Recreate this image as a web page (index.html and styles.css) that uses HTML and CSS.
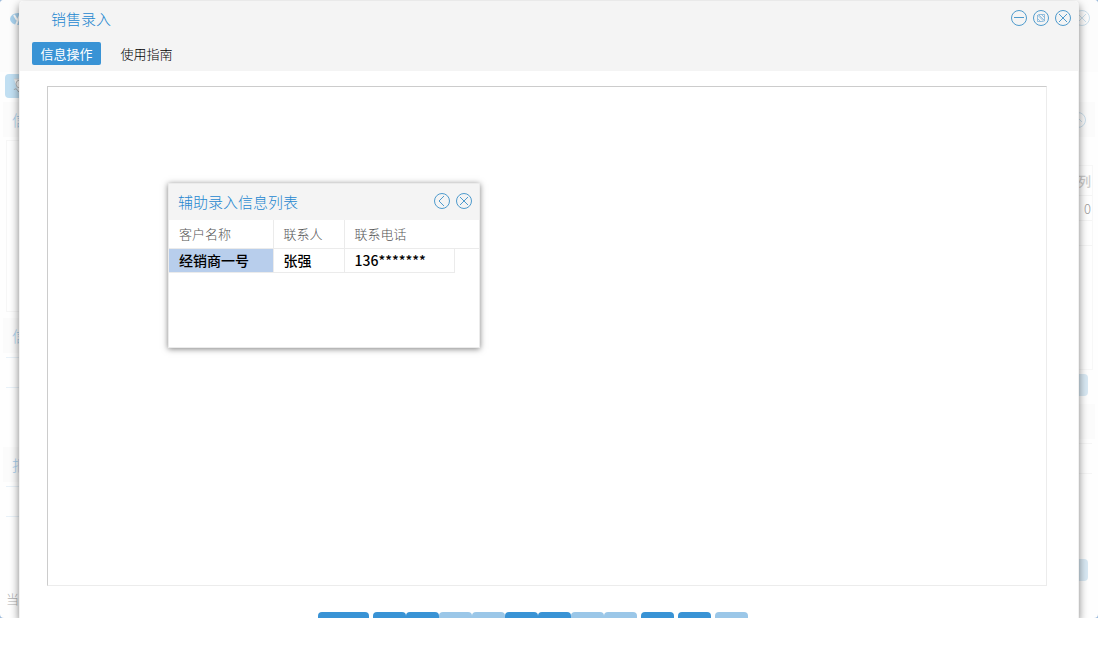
FILE: index.html
```html
<!DOCTYPE html>
<html lang="zh-CN">
<head>
    <meta charset="UTF-8">
    <meta name="viewport" content="width=device-width, initial-scale=1.0">
    <title>销售录入</title>
    <link rel="stylesheet" href="styles.css">
</head>
<body>
    <div class="screen">
        <!-- page behind the window -->
        <div class="backdrop" aria-hidden="true">
            <div class="back-header">
                <svg class="logo" width="26" height="14" viewBox="0 0 26 14"><ellipse cx="8" cy="7" rx="8" ry="6" fill="#a9d2ee"/><path d="M4 3l3 5M10 3L6 13" stroke="#fff" stroke-width="2" fill="none"/></svg>
                <svg width="16" height="16" viewBox="0 0 16 16" class="back-icon"><circle cx="8" cy="8" r="7.5"/><path d="M4 4l8 8M12 4l-8 8"/></svg>
            </div>
            <div class="back-body">
                <div class="back-left">
                    <div class="back-tab"><svg width="16" height="16" viewBox="0 0 16 16"><path d="M1 1h14v14H6" fill="#f4f4f4" stroke="#d5d5d5"/><circle cx="7" cy="6" r="4" fill="#f8f8f8" stroke="#b9b9b9"/><path d="M1 12c1-2 3-1 4 1s3 2 4 1" fill="none" stroke="#a5a5a5"/></svg></div>
                    <div class="back-title">信</div>
                    <div class="back-box"></div>
                    <div class="back-title">信</div>
                    <div class="back-line"></div>
                    <div class="back-title">报</div>
                    <div class="back-line"></div>
                    <div class="back-status">当</div>
                </div>
                <div class="back-right">
                    <div class="back-title">
                        <svg width="16" height="16" viewBox="0 0 16 16" class="back-icon"><circle cx="8" cy="8" r="7.5"/><path d="M4 10l4-4 4 4"/></svg>
                    </div>
                    <div class="back-grid">
                        <div class="back-cell back-th">列</div>
                        <div class="back-cell">0</div>
                        <div class="back-cell"></div>
                    </div>
                    <div class="back-button"></div>
                    <div class="back-title"></div>
                    <div class="back-line"></div>
                    <div class="back-button"></div>
                </div>
            </div>
        </div>

        <main class="window">
            <header class="window-header">
                <div class="title-row">
                    <h1>销售录入</h1>
                    <div class="controls">
                        <button class="icon-btn" aria-label="最小化"><svg width="16" height="16" viewBox="0 0 16 16"><circle cx="8" cy="8" r="7.5"/><path d="M3 7.5h10"/></svg></button>
                        <button class="icon-btn" aria-label="还原"><svg width="16" height="16" viewBox="0 0 16 16"><circle cx="8" cy="8" r="7.5"/><path class="thin" d="M5.500 4.500h6v6.500M4.500 5v6.500h6M4.500 5l6.500 6.500M5.500 4.500l6 6M8.500 4.500l3 3M4.500 8.500l3 3"/></svg></button>
                        <button class="icon-btn" aria-label="关闭"><svg width="16" height="16" viewBox="0 0 16 16"><circle cx="8" cy="8" r="7.5"/><path d="M4 4l8 8M12 4l-8 8"/></svg></button>
                    </div>
                </div>
                <nav class="tabs">
                    <button class="tab active">信息操作</button>
                    <button class="tab">使用指南</button>
                </nav>
            </header>

            <div class="workspace">
                <section class="dialog">
                    <div class="dialog-header">
                        <h2>辅助录入信息列表</h2>
                        <div class="controls">
                            <button class="icon-btn" aria-label="返回"><svg width="16" height="16" viewBox="0 0 16 16"><circle cx="8" cy="8" r="7.5"/><path d="M10 3L5 8l5 5"/></svg></button>
                            <button class="icon-btn" aria-label="关闭列表"><svg width="16" height="16" viewBox="0 0 16 16"><circle cx="8" cy="8" r="7.5"/><path d="M4 4l8 8M12 4l-8 8"/></svg></button>
                        </div>
                    </div>
                    <table class="list">
                        <colgroup>
                            <col class="col-name">
                            <col class="col-contact">
                            <col class="col-phone">
                            <col>
                        </colgroup>
                        <thead>
                            <tr><th>客户名称</th><th>联系人</th><th colspan="2">联系电话</th></tr>
                        </thead>
                        <tbody>
                            <tr><td class="selected">经销商一号</td><td>张强</td><td>136*******</td><td class="filler"></td></tr>
                        </tbody>
                    </table>
                </section>
            </div>

            <div class="toolbar">
                <button class="tool wide" aria-label="新增"></button>
                <div class="tool-group">
                    <button class="tool" aria-label="保存"></button>
                    <button class="tool" aria-label="修改"></button>
                    <button class="tool" aria-label="首条" disabled></button>
                    <button class="tool" aria-label="上条" disabled></button>
                    <button class="tool" aria-label="查询"></button>
                    <button class="tool" aria-label="刷新"></button>
                    <button class="tool" aria-label="下条" disabled></button>
                    <button class="tool" aria-label="末条" disabled></button>
                </div>
                <button class="tool" aria-label="打印"></button>
                <button class="tool" aria-label="导出"></button>
                <button class="tool" aria-label="删除" disabled></button>
            </div>
        </main>
    </div>
</body>
</html>
```
FILE: styles.css
```css
* {
    margin: 0;
    padding: 0;
    box-sizing: border-box;
}

body {
    background-color: #fff;
    font-family: "Noto Sans CJK SC", "Liberation Sans", sans-serif;
    font-size: 13px;
    font-weight: 300;
    color: #333;
}

button {
    border: none;
    background: none;
    font: inherit;
    color: inherit;
    cursor: pointer;
}

.screen {
    position: relative;
    height: calc(100vh - 37px);
    background-color: #9dbbdc;
    overflow: hidden;
}

/* page behind */
.backdrop {
    height: 100%;
    background-color: #fefefe;
    border-radius: 4px;
    overflow: hidden;
}

.back-header {
    display: flex;
    justify-content: space-between;
    height: 72px;
    padding: 10px 8px 0 10px;
    background-color: #fcfcfc;
}

.logo {
    margin-top: 2px;
}

.back-icon {
    fill: none;
    stroke: #cbdfec;
}

.back-body {
    display: flex;
    justify-content: space-between;
    padding: 0 3px;
}

.back-left,
.back-right {
    width: 200px;
}

.back-right {
    padding-top: 30px;
}

.back-tab {
    width: 60px;
    height: 24px;
    margin: 2px 2px 4px;
    padding: 4px 8px;
    border-radius: 4px;
    background-color: #c1dff2;
}

.back-title {
    height: 35px;
    padding: 0 9px;
    background-color: #fbfbfb;
    color: #a5cdec;
    font-size: 15px;
    line-height: 36px;
}

.back-right .back-title {
    display: flex;
    justify-content: flex-end;
    align-items: center;
}

.back-box {
    height: 172px;
    margin: 3px 3px 6px;
    border: 1px solid #f6f6f6;
}

.back-line {
    height: 31px;
    margin: 4px 3px 59px;
    border: 1px solid #e8f1f8;
    border-width: 1px 0;
}

.back-status {
    padding-left: 3px;
    margin-top: 72px;
    color: #b0b0b0;
}

.back-left .back-line:nth-last-child(2) {
    margin-bottom: 0;
}

.back-grid {
    height: 205px;
    margin: 28px 2px 4px 0;
    border: 1px solid #f7f7f7;
}

.back-cell {
    height: 25px;
    padding-right: 1px;
    border-bottom: 1px solid #f4f4f4;
    color: #999;
    text-align: right;
    line-height: 25px;
}

.back-th {
    height: 30px;
    color: #ccc;
    font-weight: 500;
    line-height: 30px;
}

.back-button {
    height: 22px;
    margin: 0 7px 8px 140px;
    border-radius: 4px;
    background-color: #d9e9f4;
}

.back-right .back-line {
    border-color: #f5f5f5;
    margin-bottom: 85px;
}

/* main window */
.window {
    position: absolute;
    top: 1px;
    bottom: 0;
    left: 19px;
    right: 19px;
    background-color: #fff;
    border: 1px solid #f2f2f2;
    border-width: 0 1px;
    border-radius: 4px 4px 0 0;
    box-shadow: 0 4px 8px rgba(0, 0, 0, 0.5);
    display: flex;
    flex-direction: column;
}

.window-header {
    background-color: #f4f4f4;
    padding: 6px 7px 6px 12px;
    border-radius: 4px 4px 0 0;
}

.title-row {
    display: flex;
    justify-content: space-between;
    padding-left: 19px;
}

h1,
h2 {
    color: #2487d0;
    font-size: 15px;
    font-weight: 300;
    line-height: 24px;
}

.controls {
    display: flex;
    gap: 6px;
    padding-top: 3px;
}

.icon-btn {
    width: 16px;
    height: 16px;
}

.icon-btn svg {
    display: block;
    fill: none;
    stroke: #4f9bcd;
}

.icon-btn .thin {
    stroke: #6ba9d6;
    stroke-width: 0.7;
}

.tabs {
    display: flex;
    gap: 11px;
    padding-top: 11px;
}

.tab {
    min-width: 69px;
    height: 23px;
    padding: 0 8px;
    border-radius: 2px;
    line-height: 23px;
    color: #000;
}

.tab.active {
    background-color: #3993d5;
    color: #fff;
    font-weight: 400;
}

.workspace {
    flex: 1;
    margin: 15px 31px 26px 27px;
    padding: 96px 120px;
    border: 1px solid #ececec;
    border-top-color: #ccc;
    border-left-color: #ccc;
}

/* lookup dialog */
.dialog {
    width: 312px;
    min-height: 165px;
    background-color: #fff;
    border: 1px solid #ebebeb;
    box-shadow: 0 1px 6px rgba(0, 0, 0, 0.5);
}

.dialog-header {
    display: flex;
    justify-content: space-between;
    height: 36px;
    padding: 6px 7px 0 9px;
    background-color: #f4f4f4;
}

.list {
    width: 100%;
    table-layout: fixed;
    border-collapse: collapse;
}

.col-name {
    width: 104px;
}

.col-contact {
    width: 71px;
}

.col-phone {
    width: 110px;
}

.list th,
.list td {
    padding: 0 10px;
    border-right: 1px solid #ebebeb;
    border-bottom: 1px solid #ebebeb;
    text-align: left;
    white-space: nowrap;
}

.list th {
    height: 28px;
    color: #555;
    font-weight: 300;
}

.list th:last-child {
    border-right: none;
}

.list td {
    height: 24px;
    color: #000;
    font-size: 14px;
    font-weight: 500;
    line-height: 20px;
}

.list .selected {
    background-color: #b8ceec;
}

.list .filler {
    padding: 0;
    border: none;
}

/* bottom buttons, cut off by the screen edge */
.toolbar {
    display: flex;
    justify-content: center;
    gap: 4px;
    height: 6px;
    padding-right: 32px;
    overflow: hidden;
}

.tool-group {
    display: flex;
}

.tool {
    width: 33px;
    height: 24px;
    border-radius: 4px;
    background-color: #3993d5;
}

.tool.wide {
    width: 51px;
}

.tool:disabled {
    background-color: #9bc7e8;
}
```
